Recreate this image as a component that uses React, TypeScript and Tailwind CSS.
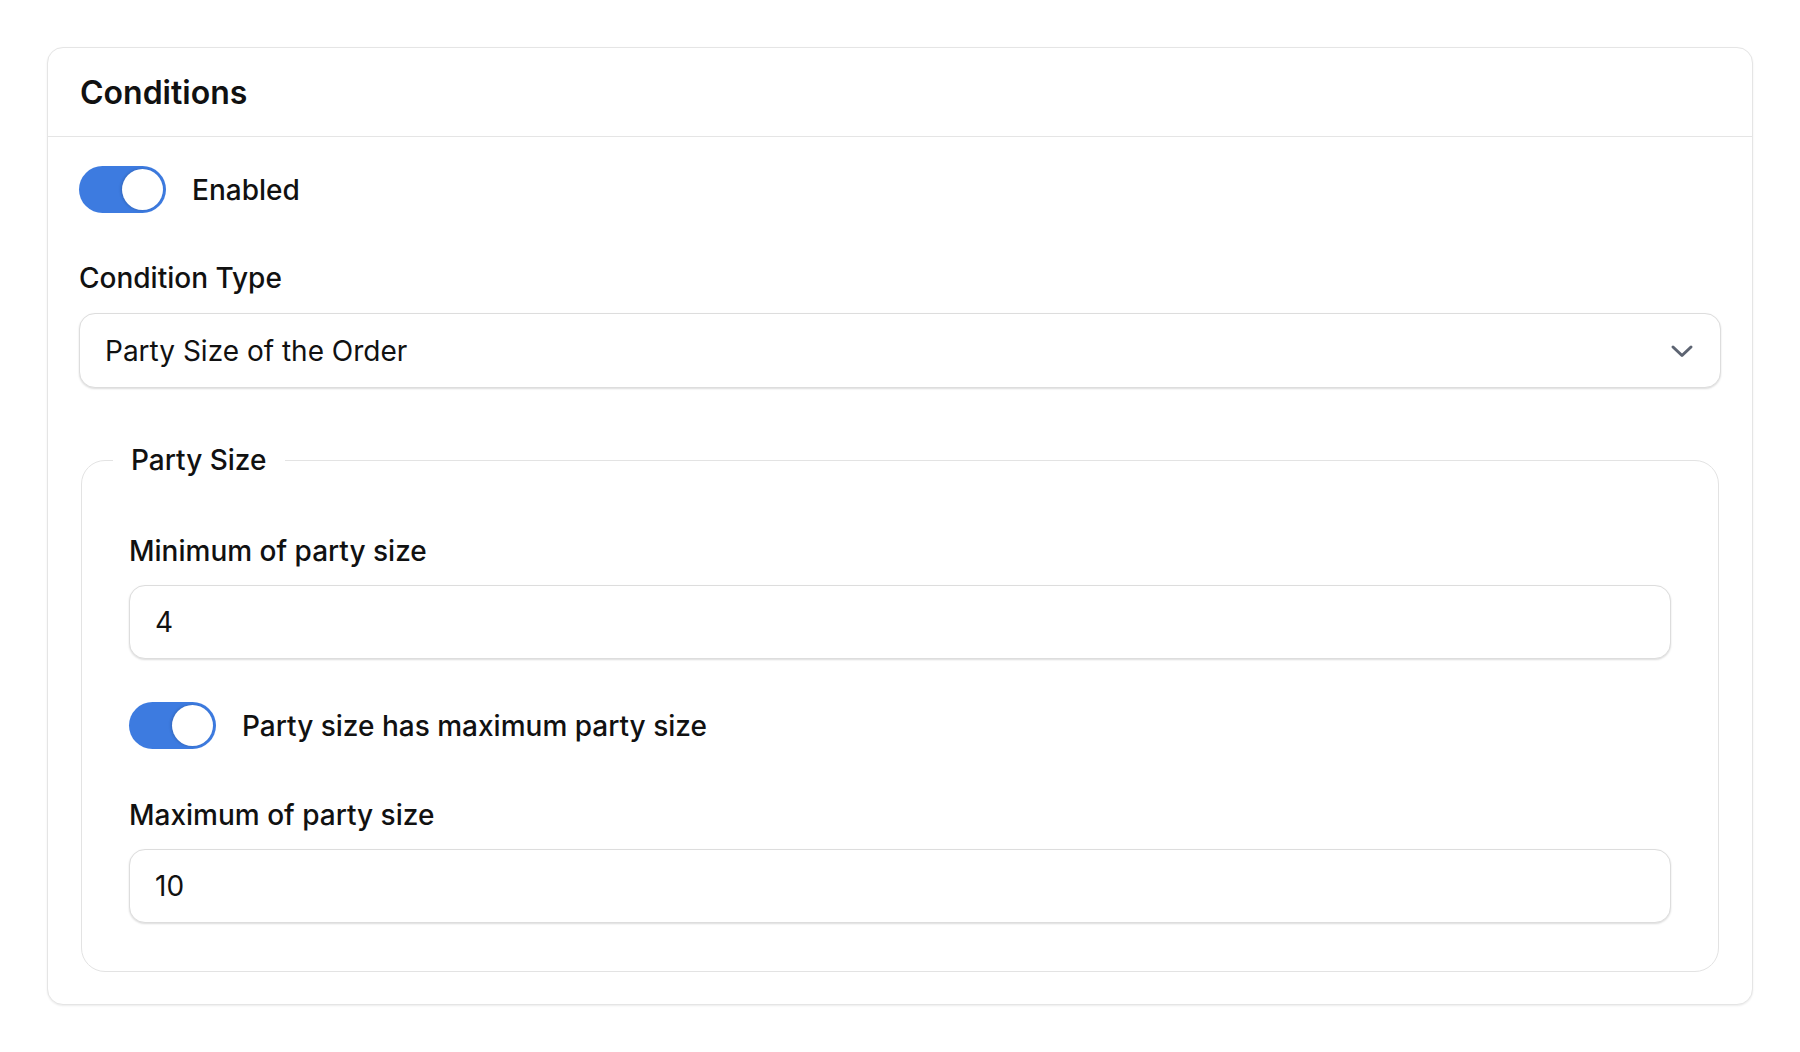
import { FC } from "react";

type ToggleProps = { label: string; checked?: boolean }

const Toggle: FC<ToggleProps> = ({ label, checked = true }) => {
  return (
    <div className="flex items-center gap-[26px]">
      <button
        type="button"
        role="switch"
        aria-checked={checked}
        className="flex h-[47px] w-[87px] shrink-0 items-center justify-end rounded-full bg-[#3d7be0] px-[3px]"
      >
        <span className="block h-[41px] w-[41px] rounded-full bg-white shadow-[-1px_0_3px_rgba(0,0,0,0.18)]" />
      </button>
      <span className="text-[28px] leading-[40px] font-medium">{label}</span>
    </div>
  )
}

const Field: FC<{ label: string; value: string; className?: string }> = ({ label, value, className }) => {
  return (
    <div className={className}>
      <label className="block text-[28px] leading-[40px] font-medium">{label}</label>
      <input
        readOnly
        value={value}
        className="mt-[14px] block h-[74px] w-full rounded-[16px] border border-[#dddddd] bg-white px-[25px] text-[28px] text-[#111] shadow-[0_1px_2px_rgba(0,0,0,0.14)] outline-none"
      />
    </div>
  )
}

export default function App() {
  return (
    <div className="min-h-screen bg-white p-[47px] font-['Inter',sans-serif] text-[#111]">
      <div className="rounded-[16px] border border-[#e5e5e5] bg-white shadow-[0_1px_2px_rgba(0,0,0,0.08)]">
        <div className="flex h-[89px] items-center border-b border-[#e5e5e5] px-[32px] pt-[2px]">
          <h2 className="text-[32px] font-semibold">Conditions</h2>
        </div>

        <div className="px-[31px] pt-[29px] pb-[32px]">
          <Toggle label="Enabled" />

          <label className="mt-[45px] block text-[28px] leading-[40px] font-medium">Condition Type</label>
          <button
            type="button"
            className="mt-[15px] flex h-[75px] w-full items-center justify-between rounded-[16px] border border-[#dddddd] bg-white pr-[26px] pl-[25px] text-left text-[28px] shadow-[0_1px_2px_rgba(0,0,0,0.14)]"
          >
            <span>Party Size of the Order</span>
            <svg width="24" height="14" viewBox="0 0 24 14" fill="none">
              <polyline points="3,3 12,11.5 21,3" stroke="#5d6472" strokeWidth="3" strokeLinecap="round" strokeLinejoin="round" />
            </svg>
          </button>

          <fieldset className="mx-[2px] mt-[52px] rounded-[24px] border border-[#e3e3e3]">
            <legend className="ml-[31px] px-[18px] text-[28px] leading-[40px] font-medium">Party Size</legend>
            <div className="px-[47px] pt-[51px] pb-[48px]">
              <Field label="Minimum of party size" value="4" />
              <div className="mt-[43px]">
                <Toggle label="Party size has maximum party size" />
              </div>
              <Field className="mt-[46px]" label="Maximum of party size" value="10" />
            </div>
          </fieldset>
        </div>
      </div>
    </div>
  )
}
